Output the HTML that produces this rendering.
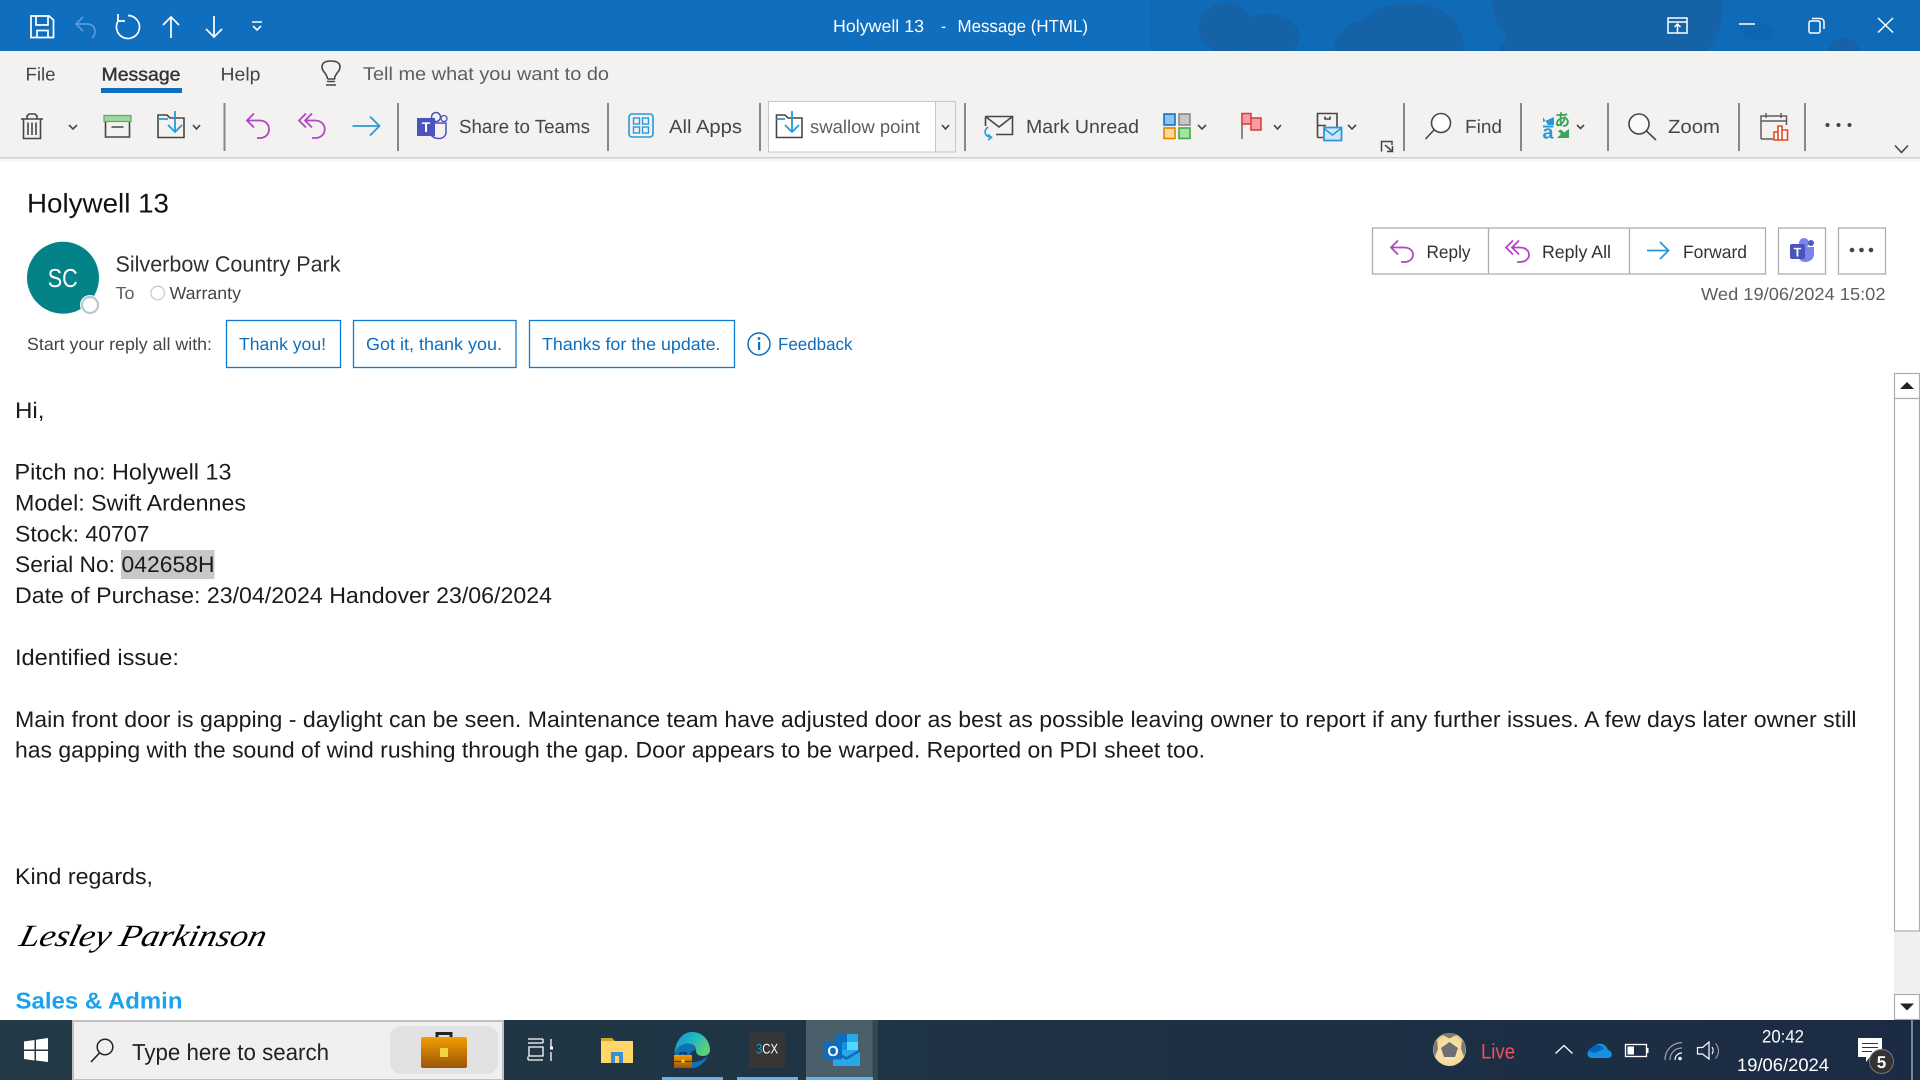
<!DOCTYPE html>
<html><head><meta charset="utf-8"><title>Holywell 13 - Message (HTML)</title>
<style>
html,body{margin:0;padding:0;width:1920px;height:1080px;overflow:hidden;background:#fff}
svg{display:block;position:absolute;left:0;top:0}
text{font-family:"Liberation Sans",sans-serif;text-rendering:geometricPrecision}
.r{font-size:19px;fill:#484644}
.b{font-size:22.5px;fill:#1b1b1b}
.q{font-size:17.5px;fill:#106ebe}
.i{fill:none;stroke:#484644;stroke-width:1.6}
.c{fill:none;stroke:#444;stroke-width:1.6}
</style></head><body>
<svg width="1920" height="1080" viewBox="0 0 1920 1080" xmlns="http://www.w3.org/2000/svg">
<defs>
<linearGradient id="bc" x1="0" y1="0" x2="0" y2="1"><stop offset="0" stop-color="#f39c00"/><stop offset="1" stop-color="#99560a"/></linearGradient>
<linearGradient id="tb" x1="0" y1="0" x2="1" y2="0"><stop offset="0" stop-color="#233a46"/><stop offset=".5" stop-color="#1f3344"/><stop offset="1" stop-color="#1b2b44"/></linearGradient>
<radialGradient id="ball" cx=".5" cy=".55" r=".6"><stop offset="0" stop-color="#fdeab8"/><stop offset=".75" stop-color="#f3d898"/><stop offset="1" stop-color="#c8a860"/></radialGradient>
<linearGradient id="edge" x1="0" y1="0" x2="1" y2=".5"><stop offset="0" stop-color="#1a8fd8"/><stop offset=".55" stop-color="#1fb8c0"/><stop offset="1" stop-color="#5ad07a"/></linearGradient>
</defs>

<!-- title bar -->
<rect width="1920" height="51" fill="#106ebe"/>
<rect x="1150" width="770" height="51" fill="#0f6ab8"/>
<g fill="#1562a6">
<ellipse cx="1226" cy="28" rx="27" ry="25"/>
<ellipse cx="1268" cy="36" rx="32" ry="22"/>
<path d="M1334 51C1334 36 1345 22 1365 20C1372 8 1390 2 1420 4C1450 6 1464 30 1464 51Z"/>
<path d="M1491 0H1722C1724 20 1718 38 1708 51H1498C1500 46 1504 42 1508 37C1498 28 1492 14 1491 0Z"/>
<path d="M1828 51C1830 42 1836 38 1844 38C1852 38 1859 44 1860 51Z"/>
</g>
<path d="M1740 28C1746 22 1752 20 1760 22L1775 30L1770 40L1745 38Z" fill="#0f66b0"/>
<g fill="none" stroke="#fff" stroke-width="1.700">
<path d="M31 16H49L53.500 20V37.500H31ZM36 16V25H48V16M37 37.500V30.500H48V37.500"/>
<path d="M83 17L76 24L83 31M76 24H87C96 24 97 34 92 38" stroke="#5a9ad6"/>
<path d="M128 15.500A11.500 11.500 0 1 1 118.500 20.500M118 14V21H125"/>
<path d="M171 38V17M163 25L171 17L179 25"/>
<path d="M214 16V37M206 29L214 37L222 29"/>
<path d="M252 22H262M253 26L257 30L261 26" stroke-width="1.600"/>
</g>
<text x="833" y="32" font-size="17.500" fill="#fff" textLength="91" lengthAdjust="spacingAndGlyphs">Holywell 13</text>
<text x="941" y="32" font-size="17.500" fill="#fff" textLength="5" lengthAdjust="spacingAndGlyphs">-</text>
<text x="957.500" y="32" font-size="17.500" fill="#fff" textLength="130.500" lengthAdjust="spacingAndGlyphs">Message (HTML)</text>
<g fill="none" stroke="#fff" stroke-width="1.500">
<path d="M1668 18H1687V33H1668ZM1668 22H1687M1677.500 33V24.500M1674.500 27L1677.500 24L1680.500 27"/>
<path d="M1739 24H1755"/>
<path d="M1809 23C1809 21.500 1810 21 1811 21H1818C1819 21 1820 21.500 1820 23V31C1820 32.500 1819 33 1818 33H1811C1810 33 1809 32.500 1809 31ZM1812 18.500H1820C1822.500 18.500 1824 20 1824 22V29"/>
<path d="M1878 18L1893 32.500M1893 18L1878 32.500"/>
</g>

<!-- ribbon -->
<rect y="51" width="1920" height="106" fill="#f3f2f1"/>
<rect y="157" width="1920" height="1.500" fill="#d2d0ce"/>
<rect y="158.500" width="1920" height="3" fill="#f6f6f6"/>
<text x="25.500" y="80.500" font-size="18.500" fill="#484644" textLength="30" lengthAdjust="spacingAndGlyphs">File</text>
<text x="101.500" y="80.500" font-size="18.500" fill="#333" stroke="#333" stroke-width=".4" textLength="79" lengthAdjust="spacingAndGlyphs">Message</text>
<rect x="101" y="88" width="81" height="5" fill="#106ebe"/>
<text x="220.500" y="80.500" font-size="18.500" fill="#484644" textLength="40" lengthAdjust="spacingAndGlyphs">Help</text>
<path class="i" d="M326 85H336M327 81.500H335M327.500 79C327 73 322 72 322 67C322 62.500 326 61 331 61C336 61 340 62.500 340 67C340 72 335 73 334.500 79H327.500" stroke-width="1.400"/>
<text x="363" y="80" font-size="18.500" fill="#605e5c" textLength="246" lengthAdjust="spacingAndGlyphs">Tell me what you want to do</text>

<g fill="#8a8886">
<rect x="223.500" y="103" width="2" height="48"/><rect x="397" y="103" width="2" height="48"/><rect x="607" y="103" width="2" height="48"/><rect x="759" y="103" width="2" height="48"/><rect x="964" y="103" width="2" height="48"/><rect x="1403" y="103" width="2" height="48"/><rect x="1520" y="103" width="2" height="48"/><rect x="1607" y="103" width="2" height="48"/><rect x="1738" y="103" width="2" height="48"/><rect x="1804" y="103" width="2" height="48"/>
</g>

<!-- trash -->
<path class="i" d="M21 119H43M27 119V116L29 114H35L37 116V119M23.500 119V138.500H40.500V119M28 122.500V135M32 122.500V135M36 122.500V135"/>
<path class="c" d="M69 125L73 129L77 125"/>
<!-- archive -->
<rect x="104" y="115.500" width="27" height="6" fill="#9fd89f" stroke="#54b054" stroke-width="1.200"/>
<path class="i" d="M105.500 122V137H129.500V122M111.500 127H123.500"/>
<!-- move -->
<path class="i" d="M158 115H167L170 118H184V137.500H158Z" fill="#f3f2f1"/>
<path d="M158 119H168M175 111V131M168 125L175 132L182 125" fill="none" stroke="#2899d8" stroke-width="1.800"/>
<path class="c" d="M193 125L196.500 129L200 125"/>
<!-- reply icons -->
<g fill="none" stroke="#b146c2" stroke-width="1.800">
<path d="M254 113.500L247 120.500L254 127.500M247 120.500H260C272 120.500 272 138 260 138H257"/>
<path d="M306 113.500L299 120.500L306 127.500M312 113.500L305 120.500L312 127.500M305 120.500H315C328 120.500 328 138 315 138H312"/>
</g>
<path d="M352.500 126H379M370 116.500L379.500 126L370 135.500" fill="none" stroke="#2899d8" stroke-width="1.800"/>
<!-- teams -->
<g>
<circle cx="436" cy="117" r="4.500" fill="none" stroke="#4b53bc" stroke-width="1.500"/>
<circle cx="444" cy="118.500" r="3" fill="none" stroke="#4b53bc" stroke-width="1.300"/>
<path d="M429 123H446V132C446 136 443 138.500 439 138.500C434 138.500 431 136 429 132Z" fill="none" stroke="#4b53bc" stroke-width="1.500"/>
<rect x="417" y="118" width="18" height="18" fill="#4b53bc"/>
<text x="426" y="132" font-size="14" font-weight="bold" fill="#fff" text-anchor="middle">T</text>
</g>
<text class="r" x="459" y="133" textLength="131" lengthAdjust="spacingAndGlyphs">Share to Teams</text>
<!-- all apps -->
<rect x="629" y="114" width="24" height="23" rx="3" fill="none" stroke="#2899d8" stroke-width="1.600"/>
<g fill="none" stroke="#2899d8" stroke-width="1.400"><rect x="633.500" y="118" width="6" height="6"/><rect x="642.500" y="118" width="6" height="6"/><rect x="633.500" y="127" width="6" height="6"/><rect x="642.500" y="127" width="6" height="6"/></g>
<text class="r" x="669" y="133" textLength="73" lengthAdjust="spacingAndGlyphs">All Apps</text>
<!-- combo -->
<rect x="768.500" y="101.500" width="187" height="50.500" fill="#f3f2f1" stroke="#c8c6c4" stroke-width="1"/>
<rect x="769" y="102" width="166" height="49.500" fill="#fff"/>
<rect x="935" y="102" width="1" height="50" fill="#c8c6c4"/>
<path class="i" d="M776.500 115H785L788 118H802V137.500H776.500Z"/>
<path d="M776.500 119H785M792 111V131M785 125L792 132L799 125" fill="none" stroke="#2899d8" stroke-width="1.800"/>
<text x="810" y="133" font-size="18.500" fill="#605e5c" textLength="110" lengthAdjust="spacingAndGlyphs">swallow point</text>
<path class="c" d="M942 125L945.500 129L949 125" stroke="#222"/>
<!-- mark unread -->
<path class="i" d="M985.500 116.500H1012.500V134.500H996M985.500 116.500V126M985.500 116.500L999 127L1012.500 116.500"/>
<path d="M988 127C983 131 985 137 991 137M988 134.500L991.500 137.500L988 140" fill="none" stroke="#2899d8" stroke-width="1.600"/>
<text class="r" x="1026" y="133" textLength="113" lengthAdjust="spacingAndGlyphs">Mark Unread</text>
<!-- categorize -->
<g stroke-width="1.600">
<rect x="1164" y="114" width="11" height="11" fill="#8cc2ee" stroke="#1372c4"/>
<rect x="1179" y="114" width="11" height="11" fill="#c8c6c4" stroke="#8a8886"/>
<rect x="1164" y="128" width="11" height="10.500" fill="#fbdc94" stroke="#e98000"/>
<rect x="1179" y="128" width="11" height="10.500" fill="#a5e0a5" stroke="#48a848"/>
</g>
<path class="c" d="M1198 125L1202 129L1206 125"/>
<!-- flag -->
<path d="M1242 113V139" stroke="#605e5c" stroke-width="1.400"/>
<path d="M1242 113.500H1251V118H1261V130H1251V124H1242Z" fill="#f59ea2" stroke="#d83b3b" stroke-width="1.500"/>
<path d="M1251 118V124" stroke="#d83b3b" stroke-width="1.500"/>
<path class="c" d="M1274 125L1277.500 129L1281 125"/>
<!-- rules -->
<path class="i" d="M1317.500 137.500V113.500H1337V127M1317.500 125.500H1326M1317.500 137.500H1323M1325 116.500V119H1330V116.500" stroke-width="1.400"/>
<rect x="1324" y="127.500" width="17.500" height="13" fill="#cfe6f8" stroke="#2899d8" stroke-width="1.800"/>
<path d="M1324 128.500L1332.500 135L1341 128.500" fill="none" stroke="#2899d8" stroke-width="1.500"/>
<path class="c" d="M1348 125L1352 129L1356 125"/>
<!-- launcher -->
<path d="M1381.500 151.500V141.500H1392V145M1385 145L1392.500 151.500M1392.500 146V151.500H1387" fill="none" stroke="#484644" stroke-width="1.500"/>
<!-- find -->
<circle cx="1441" cy="123" r="9.500" fill="#fff" stroke="#484644" stroke-width="1.600"/>
<path class="i" d="M1434 130L1425.500 139"/>
<text class="r" x="1465" y="133" textLength="37" lengthAdjust="spacingAndGlyphs">Find</text>
<!-- translate -->
<path d="M1554 117L1543 122L1543 117L1548 125L1554 125Z" fill="#2899d8"/>
<rect x="1543" y="125.500" width="10.500" height="2" fill="#2899d8"/>
<text x="1542.500" y="138.500" font-size="19" font-weight="bold" fill="#2899d8" textLength="11" lengthAdjust="spacingAndGlyphs">a</text>
<text x="1554.500" y="126" font-size="17" font-weight="bold" fill="#3aa55c" style="font-family:'Noto Sans CJK JP',sans-serif" textLength="15.500" lengthAdjust="spacingAndGlyphs">あ</text>
<path d="M1569 129V138H1557L1561 134L1558 131L1561 129.500L1564 132.500Z" fill="#3aa55c"/>
<path class="c" d="M1577 125L1580.500 128.500L1584 125"/>
<!-- zoom -->
<circle cx="1639" cy="124" r="10" fill="#f9f9f9" stroke="#484644" stroke-width="1.600"/>
<path class="i" d="M1646.500 131L1656 140" stroke-width="1.800"/>
<text class="r" x="1668" y="133" textLength="52" lengthAdjust="spacingAndGlyphs">Zoom</text>
<!-- calendar chart -->
<path d="M1761 139V116H1786.500V125M1761 121H1786.500M1766 113V118M1781 113V118M1761 139H1773" fill="none" stroke="#605e5c" stroke-width="1.500"/>
<path d="M1774 140V132H1778V126H1782V130H1787.500V140Z M1778 132V140 M1782 130V140" fill="#fff" stroke="#e8491d" stroke-width="1.600"/>
<circle cx="1827.500" cy="125" r="2" fill="#444"/><circle cx="1838.500" cy="125" r="2" fill="#444"/><circle cx="1849.500" cy="125" r="2" fill="#444"/>
<path d="M1895 145.500L1901.500 152.500L1908 145.500" fill="none" stroke="#444" stroke-width="1.500"/>

<!-- header -->
<text x="27" y="212.500" font-size="27" fill="#111" textLength="142" lengthAdjust="spacingAndGlyphs">Holywell 13</text>
<circle cx="63" cy="277.700" r="36" fill="#038387"/>
<text x="47.700" y="287" font-size="26" fill="#fff" textLength="30" lengthAdjust="spacingAndGlyphs">SC</text>
<circle cx="90" cy="305" r="10" fill="#fff"/>
<circle cx="90" cy="305" r="8" fill="#fff" stroke="#b3c9d5" stroke-width="2.200"/>
<text x="115.500" y="271.500" font-size="22" fill="#323130" textLength="225" lengthAdjust="spacingAndGlyphs">Silverbow Country Park</text>
<text x="115.500" y="299" font-size="17.500" fill="#605e5c" textLength="19" lengthAdjust="spacingAndGlyphs">To</text>
<circle cx="157.700" cy="293" r="6.800" fill="#fff" stroke="#bcd0da" stroke-width="1.300"/>
<text x="169.500" y="299" font-size="17.500" fill="#484644" textLength="71.500" lengthAdjust="spacingAndGlyphs">Warranty</text>
<text x="27" y="350" font-size="17.500" fill="#484644" textLength="185" lengthAdjust="spacingAndGlyphs">Start your reply all with:</text>
<g fill="#fff" stroke="#0f78d0" stroke-width="1.300">
<rect x="226.500" y="320.500" width="114" height="47"/><rect x="353.500" y="320.500" width="162.500" height="47"/><rect x="529.500" y="320.500" width="205" height="47"/>
</g>
<text class="q" x="239" y="350" textLength="87" lengthAdjust="spacingAndGlyphs">Thank you!</text>
<text class="q" x="366" y="350" textLength="136" lengthAdjust="spacingAndGlyphs">Got it, thank you.</text>
<text class="q" x="542" y="350" textLength="178.500" lengthAdjust="spacingAndGlyphs">Thanks for the update.</text>
<circle cx="759" cy="344" r="11" fill="none" stroke="#106ebe" stroke-width="1.500"/>
<rect x="758" y="342" width="2.200" height="8" fill="#106ebe"/><circle cx="759" cy="338.500" r="1.400" fill="#106ebe"/>
<text class="q" x="778" y="350" textLength="74.500" lengthAdjust="spacingAndGlyphs">Feedback</text>

<g fill="#fff" stroke="#adadad" stroke-width="1.300">
<rect x="1372.500" y="228" width="393" height="46"/>
<rect x="1778.500" y="228" width="47" height="46"/>
<rect x="1838.500" y="228" width="47" height="46"/>
<path d="M1488.500 228V274M1629.500 228V274"/>
</g>
<g fill="none" stroke="#b146c2" stroke-width="1.800">
<path d="M1398 240.500L1391 247.500L1398 254.500M1391 247.500H1404C1416 247.500 1416 262 1404 262H1401"/>
<path d="M1513 240.500L1506 247.500L1513 254.500M1519 240.500L1512 247.500L1519 254.500M1512 247.500H1520C1532 247.500 1532 262 1520 262H1517"/>
</g>
<path d="M1647 250.500H1668.500M1660 242L1668.500 250.500L1660 259" fill="none" stroke="#2899d8" stroke-width="1.800"/>
<text x="1426.500" y="258" font-size="18" fill="#323130" textLength="44" lengthAdjust="spacingAndGlyphs">Reply</text>
<text x="1542" y="258" font-size="18" fill="#323130" textLength="69" lengthAdjust="spacingAndGlyphs">Reply All</text>
<text x="1683" y="258" font-size="18" fill="#323130" textLength="64" lengthAdjust="spacingAndGlyphs">Forward</text>
<circle cx="1804" cy="243" r="5" fill="#7b83eb"/><circle cx="1811" cy="243" r="3" fill="#5059c9"/>
<path d="M1798 247H1814V254C1814 259 1810 262 1805 262C1800 262 1798 258 1798 254Z" fill="#7b83eb"/>
<rect x="1790" y="244" width="15" height="15" rx="2" fill="#4b53bc"/>
<text x="1797.500" y="256.500" font-size="12.500" font-weight="bold" fill="#fff" text-anchor="middle">T</text>
<circle cx="1852" cy="250" r="2.300" fill="#444"/><circle cx="1861.500" cy="250" r="2.300" fill="#444"/><circle cx="1871" cy="250" r="2.300" fill="#444"/>
<text x="1701" y="300" font-size="17.500" fill="#605e5c" textLength="184.500" lengthAdjust="spacingAndGlyphs">Wed 19/06/2024 15:02</text>

<!-- body -->
<rect x="121" y="550" width="93.500" height="29" fill="#c8c8c8"/>
<text class="b" x="15" y="418" textLength="29.500" lengthAdjust="spacingAndGlyphs">Hi,</text>
<text class="b" x="14.500" y="479.500" textLength="217" lengthAdjust="spacingAndGlyphs">Pitch no: Holywell 13</text>
<text class="b" x="15" y="510.500" textLength="231" lengthAdjust="spacingAndGlyphs">Model: Swift Ardennes</text>
<text class="b" x="15" y="541.500" textLength="134.500" lengthAdjust="spacingAndGlyphs">Stock: 40707</text>
<text class="b" x="15" y="572" textLength="100" lengthAdjust="spacingAndGlyphs">Serial No:</text>
<text class="b" x="121.500" y="572" textLength="93" lengthAdjust="spacingAndGlyphs">042658H</text>
<text class="b" x="15" y="603" textLength="537" lengthAdjust="spacingAndGlyphs">Date of Purchase: 23/04/2024 Handover 23/06/2024</text>
<text class="b" x="15" y="665" textLength="164" lengthAdjust="spacingAndGlyphs">Identified issue:</text>
<text class="b" x="15" y="727" textLength="1841.500" lengthAdjust="spacingAndGlyphs">Main front door is gapping - daylight can be seen. Maintenance team have adjusted door as best as possible leaving owner to report if any further issues. A few days later owner still</text>
<text class="b" x="15" y="757.500" textLength="1190" lengthAdjust="spacingAndGlyphs">has gapping with the sound of wind rushing through the gap. Door appears to be warped. Reported on PDI sheet too.</text>
<text class="b" x="15" y="884" textLength="138" lengthAdjust="spacingAndGlyphs">Kind regards,</text>
<text transform="translate(18,946) skewX(-14)" x="0" y="0" style="font-family:'Liberation Serif',serif;font-style:italic" font-size="31" fill="#000" textLength="246" lengthAdjust="spacingAndGlyphs">Lesley Parkinson</text>
<text x="15.500" y="1008.500" font-size="23" font-weight="bold" fill="#1ba1ee" textLength="167" lengthAdjust="spacingAndGlyphs">Sales &amp; Admin</text>

<!-- scrollbar -->
<rect x="1894" y="373" width="26" height="647" fill="#f0f0f0"/>
<rect x="1894.500" y="373.500" width="25" height="25" fill="#fff" stroke="#adadad" stroke-width="1.200"/>
<path d="M1900 389L1907 382L1914 389Z" fill="#222"/>
<rect x="1894.500" y="398.500" width="25" height="532.500" fill="#fff" stroke="#adadad" stroke-width="1.200"/>
<rect x="1894.500" y="994.500" width="25" height="25" fill="#fff" stroke="#adadad" stroke-width="1.200"/>
<path d="M1900 1003.500L1907 1010.500L1914 1003.500Z" fill="#222"/>

<!-- taskbar -->
<rect y="1020" width="1920" height="60" fill="url(#tb)"/>
<path d="M24 1041.500L34.500 1040V1049.500H24ZM36 1039.800L48 1038V1049.500H36ZM24 1051H34.500V1060.500L24 1059ZM36 1051H48V1062L36 1060.500Z" fill="#fff"/>
<rect x="73" y="1021" width="430" height="59" fill="#f0f0f0" stroke="#c0c0c0" stroke-width="2"/>
<circle cx="105" cy="1047" r="7.800" fill="none" stroke="#222" stroke-width="1.500"/><path d="M99.500 1053L91 1062" stroke="#222" stroke-width="1.600"/>
<text x="132" y="1060" font-size="23" fill="#222" textLength="197" lengthAdjust="spacingAndGlyphs">Type here to search</text>
<rect x="390" y="1026" width="108" height="48" rx="11" fill="#e2e2e2"/>
<path d="M437 1037V1033.500H451V1037" fill="none" stroke="#222" stroke-width="3"/>
<rect x="421" y="1037" width="46" height="31" rx="2" fill="url(#bc)"/>
<rect x="440" y="1048" width="8" height="9" fill="#f2d240"/>
<g fill="none" stroke="#fff" stroke-width="1.300"><path d="M528 1039H543M528 1043H543M529 1047H543V1056H529ZM528 1060H543M528 1056.500V1060M543 1039V1043M551 1039V1047M551 1052V1061"/></g>
<rect x="550" y="1046.500" width="3" height="3" fill="#fff"/>
<!-- folder -->
<path d="M601 1038H612L615 1041H633V1063H601Z" fill="#d9a520"/>
<rect x="601" y="1041" width="32" height="22" rx="1" fill="#ffd769"/>
<path d="M611 1063V1052H623V1063H619V1056H615V1063Z" fill="#3a8fd8"/>
<!-- edge -->
<path d="M692 1032C703 1032 710 1041 710 1050C710 1054 707 1056 703 1056C698 1056 696 1054 696 1050C696 1044 688 1042 682 1045C678 1047 676 1050 674.500 1054C675 1042 682 1032 692 1032Z" fill="url(#edge)"/>
<path d="M682 1045C687 1042 694 1043 696 1050C690 1051 688 1056 690 1060C693 1064 700 1062 708 1056C704 1064 698 1068 692 1068C680 1068 674 1060 675 1054C676 1050 678 1047 682 1045Z" fill="#1070b8"/>
<rect x="674" y="1055" width="18" height="13" fill="url(#bc)"/>
<rect x="674" y="1061" width="18" height="1" fill="#5a3a08"/>
<rect x="681.500" y="1059.500" width="3" height="3" fill="#f2d240"/>
<path d="M680 1055V1053H686V1055" fill="none" stroke="#222" stroke-width="1.200"/>
<!-- 3cx -->
<rect x="749" y="1032" width="36" height="36" fill="#363636"/>
<text x="756" y="1053.500" font-size="14" fill="#fff" textLength="22" lengthAdjust="spacingAndGlyphs"><tspan fill="#0f9be0">3</tspan>CX</text>
<!-- outlook -->
<rect x="806" y="1020" width="67" height="60" fill="#4a5f6a"/>
<rect x="872.500" y="1020" width="5.500" height="60" fill="#33474f"/>
<rect x="836" y="1034" width="22" height="16" fill="#1490df"/>
<rect x="836" y="1034" width="11" height="8" fill="#0f6cbd"/><rect x="847" y="1034" width="11" height="8" fill="#28a8ea"/><rect x="847" y="1042" width="11" height="8" fill="#50d9ff"/>
<path d="M833 1050H860V1066H833Z" fill="#28a8ea"/>
<path d="M833 1049L846.500 1057L860 1049V1052L846.500 1060L833 1052Z" fill="#0f6cbd"/>
<rect x="824" y="1041" width="18" height="18.500" rx="1.500" fill="#0f6cbd"/>
<text x="833" y="1056" font-size="14.500" font-weight="bold" fill="#fff" text-anchor="middle">O</text>
<g fill="#6cb0e8"><rect x="662" y="1077" width="61" height="3"/><rect x="737" y="1077" width="61" height="3"/><rect x="806" y="1077" width="67" height="3"/></g>
<!-- tray -->
<circle cx="1449.500" cy="1049.500" r="16.500" fill="url(#ball)"/>
<path d="M1449.500 1042L1458 1048L1455 1057H1444L1441 1048Z" fill="#6d6f72"/>
<path d="M1442 1034.500C1446 1032.500 1453 1032.500 1457 1034.500L1449.500 1038.500Z M1434 1044C1433 1049 1433.500 1053 1435 1056.500L1438 1048.500L1437 1040Z M1465 1044C1466 1049 1465.500 1053 1464 1056.500L1461 1048.500L1462 1040Z" fill="#7a7a78"/>
<text x="1481" y="1058.500" font-size="21" fill="#f0505a" textLength="34" lengthAdjust="spacingAndGlyphs">Live</text>
<path d="M1555.500 1053.500L1564 1045.500L1572.500 1053.500" fill="none" stroke="#fff" stroke-width="1.300"/>
<path d="M1592 1058H1608C1613 1058 1613 1051 1608 1050C1606 1043 1597 1041 1593 1048C1587 1048 1585 1058 1592 1058Z" fill="#1490df"/>
<path d="M1589 1051C1592 1044 1600 1043 1604 1049L1594 1053Z" fill="#0364b8"/>
<rect x="1625.500" y="1044.500" width="21" height="12" fill="none" stroke="#fff" stroke-width="1.300"/><rect x="1647" y="1048" width="1.500" height="5" fill="#fff"/><rect x="1627.500" y="1046.500" width="6.500" height="8" fill="#fff"/>
<g fill="none" stroke="#9aa4b0" stroke-width="1.200"><path d="M1665 1060C1665 1050 1672 1043 1682 1042.500"/><path d="M1670 1060C1670 1053 1675 1048 1682 1048"/></g>
<path d="M1675 1060C1675 1056 1678 1053 1682 1053" fill="none" stroke="#fff" stroke-width="1.200"/><circle cx="1680" cy="1058.500" r="1.800" fill="#fff"/>
<path d="M1697.500 1047.500H1702.500L1709 1042V1059L1702.500 1054H1697.500Z" fill="none" stroke="#fff" stroke-width="1.200"/>
<path d="M1712 1047C1713.500 1049 1713.500 1052 1712 1054" fill="none" stroke="#fff" stroke-width="1.100"/>
<path d="M1715.500 1043.500C1719.500 1048 1719.500 1054 1715.500 1058.500" fill="none" stroke="#9aa4b0" stroke-width="1.100"/>
<text x="1762" y="1042.500" font-size="18" fill="#fff" textLength="42" lengthAdjust="spacingAndGlyphs">20:42</text>
<text x="1737" y="1071" font-size="18" fill="#fff" textLength="92" lengthAdjust="spacingAndGlyphs">19/06/2024</text>
<path d="M1858 1038H1882V1057H1870L1866 1062V1057H1858Z" fill="#fff"/>
<path d="M1862 1043.500H1878M1862 1047.500H1878M1862 1051.500H1872" stroke="#333" stroke-width="1"/>
<circle cx="1881.500" cy="1061.500" r="12" fill="#333" stroke="#777" stroke-width="1"/>
<text x="1881.500" y="1068" font-size="17" font-weight="bold" fill="#fff" text-anchor="middle">5</text>
<rect x="1911" y="1020" width="2" height="60" fill="#7a8696"/>
</svg>
</body></html>
